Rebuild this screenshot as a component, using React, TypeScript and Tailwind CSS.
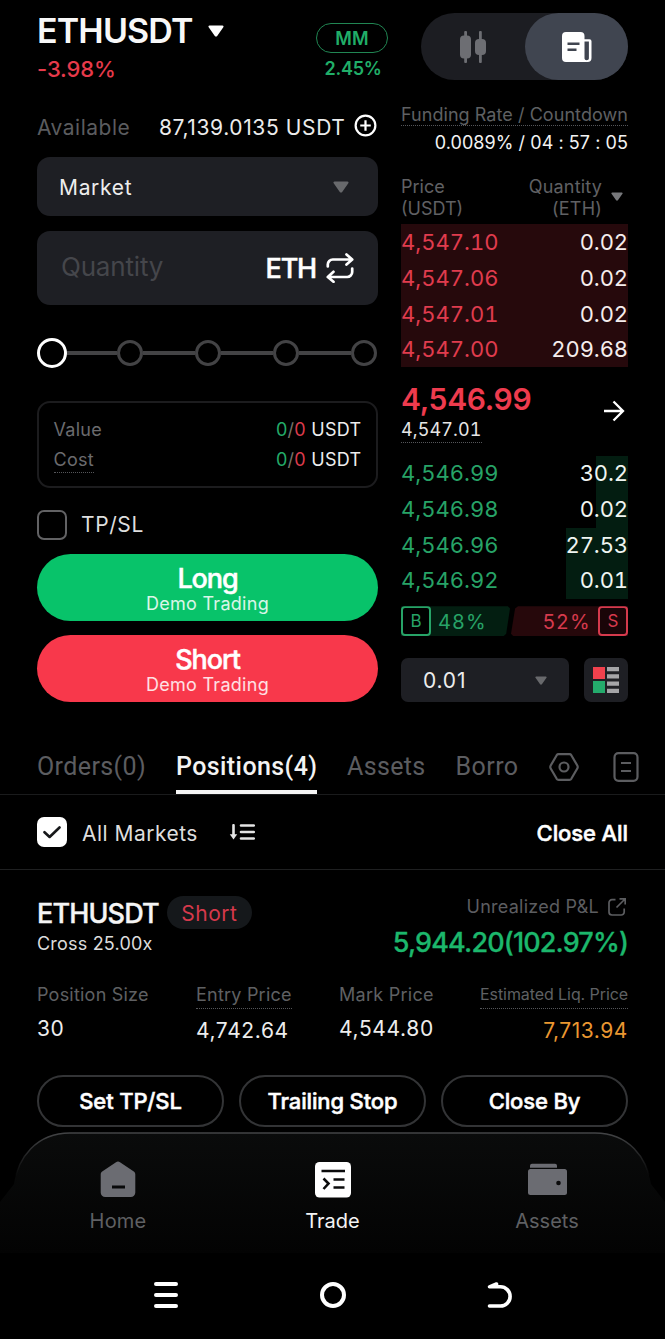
import React from "react";
import clsx from "clsx";

const asks = [
  { price: "4,547.10", qty: "0.02" },
  { price: "4,547.06", qty: "0.02" },
  { price: "4,547.01", qty: "0.02" },
  { price: "4,547.00", qty: "209.68" },
];

const bids = [
  { price: "4,546.99", qty: "30.2", depth: 14 },
  { price: "4,546.98", qty: "0.02", depth: 14 },
  { price: "4,546.96", qty: "27.53", depth: 27.3 },
  { price: "4,546.92", qty: "0.01", depth: 27.3 },
];

function Caret({ className }: { className: string }) {
  return (
    <svg viewBox="0 0 16 12" className={className} fill="currentColor">
      <path d="M1.6 0.5h12.8c1 0 1.5 1 .9 1.8L9.2 11c-.6.8-1.8.8-2.4 0L.7 2.3C.1 1.5.6.5 1.6.5Z" />
    </svg>
  );
}

function ViewToggle() {
  return (
    <div className="mt-[13px] ml-5 flex h-[67px] shrink-0 rounded-full bg-[#1c1d22]">
      <div className="flex flex-1 items-center justify-center">
        <svg viewBox="0 0 28 34" className="h-[34px] w-7 fill-[#6d6e73]">
          <rect x="5.2" y="1" width="2.8" height="32" rx="1" />
          <rect x="1" y="5.5" width="11" height="23" rx="4" />
          <rect x="20" y="1" width="2.8" height="32" rx="1" />
          <rect x="16" y="9" width="11" height="16" rx="4" />
        </svg>
      </div>
      <div className="flex w-[103px] items-center justify-center rounded-full bg-[#404550]">
        <svg viewBox="0 0 30 30" className="size-[30px]">
          <path
            fill="#fff"
            fillRule="evenodd"
            d="M4 0h14.5a4 4 0 0 1 4 4v3.2h5a2 2 0 0 1 2 2V26a4 4 0 0 1-4 4H4a4 4 0 0 1-4-4V4a4 4 0 0 1 4-4Zm18.5 9.5V26.5a2.200 1.700 0 0 0 4.400 0V9.500Z"
          />
          <path stroke="#404550" strokeWidth="2.5" d="M5.500 11.700h12M5.500 17.700h9" />
        </svg>
      </div>
    </div>
  );
}

function LeverageSlider() {
  return (
    <div className="mt-[33px] mr-[1.5px] flex h-[30px] items-center">
      <span className="relative -mr-0.5 size-[30px] shrink-0 rounded-full border-[3px] border-white bg-black" />
      {[25, 50, 75, 100].map((step) => (
        <React.Fragment key={step}>
          <span className="h-1 flex-1 bg-[#434345]" />
          <span className="size-[26px] shrink-0 rounded-full border-[3.5px] border-[#434345]" />
        </React.Fragment>
      ))}
    </div>
  );
}

function CostLine({ label, dotted }: { label: string; dotted?: boolean }) {
  return (
    <div className="flex h-[30px] items-center justify-between text-[18px] leading-6">
      <span className={clsx("tracking-[0.3px] text-[#6b6b6e]", dotted && "border-b border-dotted border-[#55565a]")}>
        {label}
      </span>
      <span className="tracking-[0.29px] text-[#eee]">
        <span className="text-[#23ab69]">0</span>
        <span className="text-[#77736a]">/</span>
        <span className="text-[#db3a4b]">0</span> USDT
      </span>
    </div>
  );
}

function OrderButton({ label, className }: { label: string; className: string }) {
  return (
    <button className={clsx("flex w-full flex-col items-center rounded-full text-white", className)}>
      <span className="mt-[10px] text-[27px] leading-[30px] font-medium tracking-[-1.1px] [-webkit-text-stroke:0.5px]">
        {label}
      </span>
      <span className="text-[18px] leading-5 tracking-[0.28px] text-white/85">Demo Trading</span>
    </button>
  );
}

function OrderForm() {
  return (
    <div className="w-[341px] shrink-0">
      <div className="flex h-[88px] justify-between">
        <div>
          <div className="flex items-center">
            <h1 className="mt-3 text-[34px] leading-[38px] font-semibold tracking-[-0.83px] text-[#f8f8f8]">ETHUSDT</h1>
            <Caret className="mt-3 ml-[15px] h-3 w-4 text-white" />
          </div>
          <p className="mt-[7px] text-[22px] leading-6 font-medium tracking-[-0.09px] text-[#e73a4b]">-3.98%</p>
        </div>
        <div className="mr-[-10px] flex flex-col items-center pt-[23px]">
          <span className="flex h-[30px] w-[72px] items-center justify-center rounded-full border border-[#218653] pt-px text-[18px] font-semibold tracking-[0.2px] text-[#20ae68]">
            MM
          </span>
          <span className="mt-1 ml-0.5 text-[18px] leading-6 font-semibold tracking-[-0.24px] text-[#20ae68]">2.45%</span>
        </div>
      </div>

      <div className="mt-6 flex h-[30px] items-center text-[21px]">
        <span className="mt-0.5 tracking-[0.5px] text-[#5b5c5f]">Available</span>
        <span className="mt-0.5 ml-auto tracking-[0.62px] text-[#ececec]">87,139.0135 USDT</span>
        <svg viewBox="0 0 24 24" className="mr-[1.5px] mb-[3px] ml-2 size-[23px]" fill="none" stroke="#fff" strokeWidth="2.3">
          <circle cx="12" cy="12" r="10.3" />
          <path d="M6.500 12h11M12 6.500v11" />
        </svg>
      </div>

      <div className="mt-[15px] flex h-[59px] items-center justify-between rounded-[13px] bg-[#1e1f24] pr-[29px] pl-[22px]">
        <span className="mt-0.5 text-[21px] tracking-[0.68px] text-[#ededed]">Market</span>
        <Caret className="h-3 w-4 text-[#68696c]" />
      </div>

      <div className="mt-[15px] flex h-[74px] items-center rounded-[13px] bg-[#1e1f24] pr-6 pl-6">
        <span className="mb-[3px] text-[26px] tracking-[-0.19px] text-[#45464b]">Quantity</span>
        <span className="mt-[3px] ml-auto text-[27px] font-medium tracking-[-1.2px] text-white [-webkit-text-stroke:0.5px]">
          ETH
        </span>
        <svg
          viewBox="0 0 28 30"
          className="ml-[10px] h-[30px] w-7"
          fill="none"
          stroke="#fff"
          strokeWidth="2.7"
          strokeLinecap="round"
          strokeLinejoin="round"
        >
          <path d="M1.800 13.500v-2a5 5 0 0 1 5-5H26M20.500 1.500l5.700 5-5.700 5M26.200 15.500v3.500a5 5 0 0 1-5 5H2M7.500 18.800 1.800 24l5.700 4.800" />
        </svg>
      </div>

      <LeverageSlider />

      <div className="mt-[33px] h-[87px] rounded-[13px] border-2 border-[#1c1c1e] px-[14.5px] pt-3">
        <CostLine label="Value" />
        <CostLine label="Cost" dotted />
      </div>

      <div className="mt-[22px] flex h-[30px] items-center gap-3.5">
        <span className="size-[30px] rounded-[7px] border-2 border-[#626264]" />
        <span className="text-[21px] tracking-[0.6px] text-[#dedede]">TP/SL</span>
      </div>

      <OrderButton label="Long" className="mt-[14px] h-[67px] bg-[#08c36a]" />
      <OrderButton label="Short" className="mt-[14px] h-[67px] bg-[#f8384b]" />
    </div>
  );
}

function DepthRatio() {
  return (
    <div className="mt-[7px] flex h-[30px] justify-between text-[20px]">
      <div className="flex w-[109px] items-center bg-[#031e11] text-[#27a367] [clip-path:polygon(0_0,98%_0,100%_8%,96.500%_92%,94%_100%,0_100%)]">
        <span className="flex size-[30px] items-center justify-center rounded-[4px] border-2 border-[#27a367] bg-black pt-0.5 text-[17px]">
          B
        </span>
        <span className="mt-0.5 ml-[7px] tracking-[1.4px]">48%</span>
      </div>
      <div className="flex w-[117px] items-center justify-end bg-[#26080b] text-[#d63a4d] [clip-path:polygon(6%_0,100%_0,100%_100%,2%_100%,0_92%,3.500%_8%)]">
        <span className="mt-0.5 mr-[7px] tracking-[1.4px]">52%</span>
        <span className="flex size-[30px] items-center justify-center rounded-[4px] border-2 border-[#d63a4d] bg-[#1a0508] pt-0.5 text-[17px]">
          S
        </span>
      </div>
    </div>
  );
}

function OrderBook() {
  return (
    <div className="flex w-[227px] shrink-0 flex-col">
      <ViewToggle />

      <div className="mt-6 flex flex-col items-end text-[18px]">
        <span className="h-[22px] border-b border-dotted border-[#55565a] leading-[22px] tracking-[0.06px] whitespace-nowrap text-[#5f6063]">
          Funding Rate / Countdown
        </span>
        <span className="mt-[5px] leading-6 tracking-[0.06px] whitespace-nowrap text-[#f3f3f3]">0.0089% / 04 : 57 : 05</span>
      </div>

      <div className="mt-[21px] flex justify-between text-[18px] leading-[22px] text-[#606164]">
        <span>
          Price
          <br />
          (USDT)
        </span>
        <div className="flex items-center gap-[9px] pr-[5px] text-right tracking-[0.19px]">
          <span>
            Quantity
            <br />
            (ETH)
          </span>
          <Caret className="-mt-1 h-[9px] w-3 text-[#77787b]" />
        </div>
      </div>

      <div className="mt-1 bg-[#26090c] text-[22px] leading-9 tabular-nums">
        {asks.map((row) => (
          <div key={row.price} className="flex h-[35.8px] justify-between">
            <span className="text-[#e03c4e]">{row.price}</span>
            <span className="tracking-[-0.1px] text-[#f5eded]">{row.qty}</span>
          </div>
        ))}
      </div>

      <div className="flex h-[89px] items-center justify-between">
        <div>
          <p className="mt-px text-[30px] leading-9 font-semibold tracking-[-0.33px] text-[#ee3b4e]">4,546.99</p>
          <span className="mt-0.5 block h-6 w-fit border-b border-dotted border-[#55565a] text-[18px] leading-[22px] tracking-[0.1px] text-[#e6e6e6] tabular-nums">
            4,547.01
          </span>
        </div>
        <svg viewBox="0 0 22 22" className="mr-[3px] mb-0.5 size-[22px]" fill="none" stroke="#fff" strokeWidth="2.3">
          <path d="M1 11h18.500M10.500 1.500 20 11l-9.500 9.500" />
        </svg>
      </div>

      <div className="text-[22px] leading-[35.8px] tabular-nums">
        {bids.map((row) => (
          <div key={row.price} className="relative flex h-[35.8px] justify-between">
            <span className="absolute inset-y-0 right-0 bg-[#031d11]" style={{ width: `${row.depth}%` }} />
            <span className="relative text-[#27a367]">{row.price}</span>
            <span className="relative tracking-[-0.1px] text-[#f0f5f2]">{row.qty}</span>
          </div>
        ))}
      </div>

      <DepthRatio />

      <div className="mt-[22px] flex h-11 gap-[15px]">
        <div className="flex flex-1 items-center justify-between rounded-[7px] bg-[#1e1f24] pr-[21px] pl-[22px]">
          <span className="mt-0.5 text-[21px] tracking-[0.8px] text-[#ededed]">0.01</span>
          <Caret className="h-[9px] w-3.5 text-[#68696c]" />
        </div>
        <div className="flex w-11 items-center justify-center rounded-[7px] bg-[#1e1f24]">
          <svg viewBox="0 0 26 26" className="size-[26px]">
            <path fill="#f0414d" d="M0 0h12v12H0z" />
            <path fill="#24ab6c" d="M0 14h12v12H0z" />
            <path fill="#a5a5a8" d="M14 0h12v4.200H14zM14 7.300h12v4.200H14zM14 14.500h12v4.200H14zM14 21.800h12V26H14z" />
          </svg>
        </div>
      </div>
    </div>
  );
}

function Tabs() {
  return (
    <div className="mt-8 flex h-[61px] border-b border-[#1a1b1c] pl-[37px] font-['Roboto',sans-serif] text-[25px] leading-[65px] whitespace-nowrap text-[#5c5d60]">
      <span className="w-[139px] tracking-[0.4px]">Orders(0)</span>
      <span className="w-[141px] border-b-4 border-[#f5f5f5] font-medium tracking-[0.41px] text-[#f3f3f3]">Positions(4)</span>
      <span className="ml-[30px] tracking-[0.35px]">Assets</span>
      <span className="ml-[30px] w-[63px] overflow-hidden tracking-[0.44px]">Borro</span>
      <div className="mt-[5px] ml-auto flex items-center gap-[34px] pr-[26px]">
        <svg viewBox="0 0 30 28" className="h-7 w-[30px]" fill="none" stroke="currentColor" strokeWidth="2.2" strokeLinejoin="round">
          <path d="M9.500 1.200h11c.8 0 1.400.4 1.800 1l6 10.300c.5.900.5 2.100 0 3l-6 10.300c-.4.600-1 1-1.800 1h-11c-.8 0-1.400-.4-1.800-1l-6-10.300c-.5-.9-.5-2.100 0-3l6-10.300c.4-.6 1-1 1.800-1Z" />
          <circle cx="15" cy="14" r="4.500" />
        </svg>
        <svg viewBox="0 0 26 30" className="h-[30px] w-[26px]" fill="none" stroke="currentColor" strokeWidth="2.2">
          <rect x="1.5" y="1.2" width="23" height="27.6" rx="4" />
          <path d="M8 11h10M8 19h10" />
        </svg>
      </div>
    </div>
  );
}

function MarketFilter() {
  return (
    <div className="flex h-[75px] items-center border-b border-[#1f2021] px-[37px]">
      <span className="flex size-[30px] items-center justify-center rounded-[7px] bg-white">
        <svg
          viewBox="0 0 18 13"
          className="h-[13px] w-[18px]"
          fill="none"
          stroke="#17181a"
          strokeWidth="2.6"
          strokeLinecap="round"
          strokeLinejoin="round"
        >
          <path d="M1.500 6.200 6.600 11 16.500 1.500" />
        </svg>
      </span>
      <span className="mt-[3px] ml-[15px] text-[21px] tracking-[0.48px] text-[#dedede]">All Markets</span>
      <svg viewBox="0 0 26 16" className="ml-[31px] h-4 w-[26px]" stroke="#e4e4e4" strokeWidth="2.6" strokeLinecap="round">
        <path d="M4.500 1.200v10M12 1.500h12.800M12 8h12.800M12 14.500h12.800" />
        <path fill="#e4e4e4" stroke="none" d="M.800 10.200h7.400L4.500 15.500Z" />
      </svg>
      <span className="mt-0.5 ml-auto text-[22px] font-medium tracking-[-0.1px] text-white [-webkit-text-stroke:0.5px]">
        Close All
      </span>
    </div>
  );
}

interface StatProps {
  label: string;
  value: string;
  className?: string;
  labelClass?: string;
  valueClass?: string;
}

function Stat({ label, value, className, labelClass, valueClass }: StatProps) {
  return (
    <div className={clsx("flex flex-col", className)}>
      <span className={clsx("text-[18px] leading-6 whitespace-nowrap text-[#5f6063]", labelClass)}>{label}</span>
      <span className={clsx("text-[21px] leading-7 text-[#ededed]", valueClass)}>{value}</span>
    </div>
  );
}

function Position() {
  const dotted = "mb-2 h-[26px] border-b border-dotted border-[#55565a]";
  return (
    <section className="px-[37px]">
      <div className="flex h-[113px] justify-between pt-[26px]">
        <div>
          <div className="flex h-[33px] items-center">
            <h2 className="mt-[3px] text-[27px] font-medium tracking-[-0.85px] text-[#f5f5f5] [-webkit-text-stroke:0.4px]">
              ETHUSDT
            </h2>
            <span className="ml-2 flex h-[33px] w-[85px] items-center justify-center rounded-full bg-[#15181b] pt-0.5 text-[21px] tracking-[0.5px] text-[#d5394b]">
              Short
            </span>
          </div>
          <p className="mt-[3px] text-[18px] leading-6 tracking-[0.2px] text-[#dcdcdc]">Cross 25.00x</p>
        </div>
        <div className="flex flex-col items-end">
          <div className="flex items-center pr-0.5 text-[18px] leading-[22px] text-[#5c5d60]">
            <span className="tracking-[0.25px]">Unrealized P&amp;L</span>
            <svg viewBox="0 0 18 18" className="ml-[9px] size-[18px]" fill="none" stroke="currentColor" strokeWidth="1.7">
              <path d="M7.500 1.700H4a3 3 0 0 0-3 3V14a3 3 0 0 0 3 3h9.200a3 3 0 0 0 3-3v-3.500M11.500.900h5.700v5.700M17 1 8.500 9.500" />
            </svg>
          </div>
          <span className="mt-2 text-[27px] leading-[34px] font-medium tracking-[-0.85px] text-[#1cb76c] [-webkit-text-stroke:0.3px]">
            5,944.20(102.97%)
          </span>
        </div>
      </div>

      <div className="flex h-[92px]">
        <Stat label="Position Size" value="30" className="w-[159px]" labelClass="mb-2 tracking-[0.22px]" valueClass="tracking-[0.6px]" />
        <Stat
          label="Entry Price"
          value="4,742.64"
          className="mr-[47px] w-24"
          labelClass={clsx("tracking-[0.22px]", dotted)}
          valueClass="tracking-[0.62px]"
        />
        <Stat label="Mark Price" value="4,544.80" labelClass="mb-2 tracking-[0.27px]" valueClass="tracking-[0.66px]" />
        <Stat
          label="Estimated Liq. Price"
          value="7,713.94"
          className="ml-auto items-end"
          labelClass={clsx("text-[16px]! leading-[23px]! tracking-[-0.08px]", dotted)}
          valueClass="text-[#ea9731]! tracking-[0.55px]"
        />
      </div>

      <div className="grid h-[52px] grid-cols-3 gap-[15px]">
        {["Set TP/SL", "Trailing Stop", "Close By"].map((label) => (
          <button
            key={label}
            className="rounded-full border-2 border-[#333436] text-[22px] font-medium tracking-[-0.15px] text-white [-webkit-text-stroke:0.5px]"
          >
            {label}
          </button>
        ))}
      </div>
    </section>
  );
}

function BottomNav() {
  return (
    <nav className="relative mt-[5px] h-[121px] text-[20px] leading-6 text-[#5f6063]">
      {/* curved panel with an edge that fades out down the sides */}
      <svg viewBox="0 0 665 121" className="absolute inset-0 h-[121px] w-[665px]" fill="none">
        <defs>
          <linearGradient id="navFill" x1="0" y1="0" x2="0" y2="1">
            <stop offset="0" stopColor="#0a0b0b" />
            <stop offset="1" stopColor="#030303" />
          </linearGradient>
          <linearGradient id="navEdge" x1="0" y1="0" x2="0" y2="1">
            <stop offset="0" stopColor="#434446" />
            <stop offset="0.85" stopColor="#434446" stopOpacity="0" />
          </linearGradient>
        </defs>
        <path d="M0 121V70L14 52C18 26 36 1 70 1H595c34 0 52 25 56 51L665 70V121Z" fill="url(#navFill)" />
        <path d="M14 52C18 26 36 1 70 1H595c34 0 52 25 56 51" stroke="url(#navEdge)" strokeWidth="1.5" />
      </svg>
      <div className="relative flex justify-between px-[11px] pt-[29px]">
        <div className="flex w-[214px] flex-col items-center gap-[11px]">
          <svg viewBox="0 0 36 37" className="h-[37px] w-9">
            <path
              fill="#6b6c72"
              d="M20 1.200 33.800 10.600c.9.600 1.500 1.700 1.500 2.800V31.500a4.500 4.500 0 0 1-4.500 4.500H5.200A4.500 4.500 0 0 1 .700 31.500V13.400c0-1.100.6-2.200 1.500-2.800L16 1.200c1.200-.8 2.800-.8 4 0Z"
            />
            <path stroke="#08090a" strokeWidth="3" d="M12 26h13" />
          </svg>
          <span className="tracking-[0.2px]">Home</span>
        </div>
        <div className="flex w-[214px] flex-col items-center gap-[11px] text-[#f5f5f5]">
          <svg viewBox="0 0 36 37" className="h-[37px] w-9">
            <rect y="1" width="36" height="35.5" rx="4.5" fill="#fff" />
            <path
              stroke="#0b0b0c"
              strokeWidth="2.6"
              fill="none"
              d="M6.500 10h23.500M8.500 17.500l5 5-5 5.500M18.500 18.500H29.500M18.500 26.500H29.500"
            />
          </svg>
          <span>Trade</span>
        </div>
        <div className="flex w-[214px] flex-col items-center gap-[11px]">
          <svg viewBox="0 0 39 37" className="h-[37px] w-[39px] fill-[#6b6c72]">
            <path d="M4 2.700h23a2 2 0 0 1 2 2v2H2v-2a2 2 0 0 1 2-2Z" />
            <rect y="8" width="39" height="26" rx="2.5" />
            <circle cx="30.5" cy="22" r="2.3" fill="#0b0b0c" />
          </svg>
          <span>Assets</span>
        </div>
      </div>
    </nav>
  );
}

function SystemNav() {
  return (
    <div className="flex h-[84px] items-center justify-center gap-[141px]">
      <svg viewBox="0 0 26 26" className="size-[26px]" stroke="#fff" strokeWidth="4" strokeLinecap="round">
        <path d="M3 2h20M3 13h20M3 24h20" />
      </svg>
      <span className="size-[26px] rounded-full border-4 border-white" />
      <svg viewBox="0 0 26 26" className="size-[26px]" fill="none" stroke="#fff" strokeWidth="3.6" strokeLinecap="round" strokeLinejoin="round">
        <path d="M2.500 24H13.500a9.600 9.600 0 0 0 0-19.200H2.500L9.500 2V4.500" />
      </svg>
    </div>
  );
}

export default function App() {
  return (
    <div className="flex h-[1339px] w-[665px] flex-col overflow-hidden bg-black font-['Inter',sans-serif]">
      <div className="flex h-[702px] shrink-0 justify-between px-[37px]">
        <OrderForm />
        <OrderBook />
      </div>
      <Tabs />
      <MarketFilter />
      <Position />
      <BottomNav />
      <SystemNav />
    </div>
  );
}
